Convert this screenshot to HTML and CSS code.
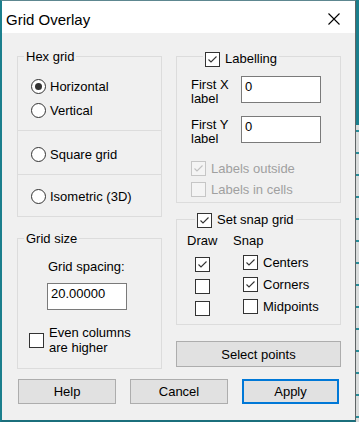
FILE: index.html
```html
<!DOCTYPE html>
<html lang="en">
<head>
  <meta charset="UTF-8">
  <meta name="viewport" content="width=device-width, initial-scale=1.0">
  <title>Grid Overlay</title>
  <link rel="stylesheet" href="styles.css">
</head>
<body>
<div class="screen">
  <div class="window">
    <div class="titlebar">
      <span class="title">Grid Overlay</span>
      <svg class="close" width="12" height="12" viewBox="0 0 12 12">
        <path d="M0.5 0.5 L11.5 11.5 M11.5 0.5 L0.5 11.5" stroke="#000" stroke-width="1.1" fill="none"/>
      </svg>
    </div>

    <div class="content">
      <div class="columns">
        <div class="col">
          <div class="group hex">
            <div class="section first">
              <div class="group-title hex-title">Hex grid</div>
              <div class="radio-row top-row"><span class="radio on"><span class="dot"></span></span>Horizontal</div>
              <div class="radio-row"><span class="radio"></span>Vertical</div>
            </div>
            <div class="section second">
              <div class="radio-row"><span class="radio"></span>Square grid</div>
            </div>
            <div class="section third">
              <div class="radio-row"><span class="radio"></span>Isometric (3D)</div>
            </div>
          </div>

          <div class="group size">
            <div class="group-title">Grid size</div>
            <div class="spacing-label">Grid spacing:</div>
            <div class="field spacing-field">20.00000</div>
            <div class="check-row even">
              <span class="check"></span>
              <span>Even columns<br>are higher</span>
            </div>
          </div>
        </div>

        <div class="col">
          <div class="group labelling">
            <div class="group-title check-title lab-title">
              <span class="check"><svg viewBox="0 0 13 13"><polyline points="2.5,6.5 5,9 10.5,3.5"/></svg></span>Labelling
            </div>
            <div class="label-row first-row">
              <span class="field-label">First X<br>label</span>
              <div class="field">0</div>
            </div>
            <div class="label-row">
              <span class="field-label">First Y<br>label</span>
              <div class="field">0</div>
            </div>
            <div class="check-row disabled outside">
              <span class="check"><svg viewBox="0 0 13 13"><polyline points="2.5,6.5 5,9 10.5,3.5"/></svg></span>Labels outside
            </div>
            <div class="check-row disabled cells">
              <span class="check"></span>Labels in cells
            </div>
          </div>

          <div class="group snap">
            <div class="group-title check-title snap-title">
              <span class="check"><svg viewBox="0 0 13 13"><polyline points="2.5,6.5 5,9 10.5,3.5"/></svg></span>Set snap grid
            </div>
            <div class="snap-cols">
              <div class="draw-col">
                <div class="col-head">Draw</div>
                <div class="rows">
                  <div class="snap-row"><span class="check"><svg viewBox="0 0 13 13"><polyline points="2.5,6.5 5,9 10.5,3.5"/></svg></span></div>
                  <div class="snap-row"><span class="check"></span></div>
                  <div class="snap-row"><span class="check"></span></div>
                </div>
              </div>
              <div class="snap-col">
                <div class="col-head">Snap</div>
                <div class="rows">
                  <div class="snap-row"><span class="check"><svg viewBox="0 0 13 13"><polyline points="2.5,6.5 5,9 10.5,3.5"/></svg></span>Centers</div>
                  <div class="snap-row"><span class="check"><svg viewBox="0 0 13 13"><polyline points="2.5,6.5 5,9 10.5,3.5"/></svg></span>Corners</div>
                  <div class="snap-row"><span class="check"></span>Midpoints</div>
                </div>
              </div>
            </div>
          </div>

          <button class="btn select">Select points</button>
        </div>
      </div>

      <div class="footer">
        <button class="btn">Help</button>
        <button class="btn">Cancel</button>
        <button class="btn default">Apply</button>
      </div>
    </div>
  </div>
  <div class="behind"></div>
</div>
</body>
</html>
```

FILE: styles.css
```css
* {
  box-sizing: border-box;
}

body {
  margin: 0;
  background: #1b7f8d;
  font-family: "Liberation Sans", Arial, sans-serif;
  font-size: 13px;
  color: #000;
}

.screen {
  display: flex;
  height: 422px;
}

.window {
  width: 356px;
  height: 422px;
  display: flex;
  flex-direction: column;
  background: #f0f0f0;
  border-left: 2px solid #1b7f8d;
  border-top: 1px solid #5d8790;
  border-right: 1px solid #5f6566;
  border-bottom: 2px solid #1b6f7c;
}

.behind {
  flex: 1;
  background:
    linear-gradient(#1b7f8d, #1b7f8d) top / 100% 125px no-repeat,
    repeating-linear-gradient(#d9dcdc 0 20px, #2a8c99 20px 22px);
}

/* title bar */
.titlebar {
  height: 32px;
  background: #fff;
  display: flex;
  justify-content: space-between;
  align-items: flex-start;
  padding: 10px 15px 0 4px;
}

.title {
  font-size: 15px;
  line-height: 18px;
}

.close {
  margin-top: 2px;
}

/* body */
.content {
  flex: 1;
  padding: 23px 14px 0 15px;
}

.columns {
  display: grid;
  grid-template-columns: 145px 165px;
  column-gap: 14px;
  align-items: start;
}

.col {
  display: flex;
  flex-direction: column;
}

.group {
  border: 1px solid #dcdcdc;
}

.group-title {
  width: fit-content;
  height: 16px;
  line-height: 16px;
  margin: -8px 0 0 6px;
  padding: 0 2px;
  background: #f0f0f0;
}

.check-title {
  display: flex;
  align-items: center;
  gap: 5px;
}

.hex-title {
  margin-left: -7px;
}

.lab-title {
  margin: -6px 0 0 12px;
}

.snap-title {
  margin: -8px 0 0 8px;
}

/* hex grid */
.section {
  padding: 0 0 8px 13px;
}

.top-row {
  margin-top: 9px;
}

.section.second {
  border-top: 1px solid #dcdcdc;
  padding-top: 11px;
}

.section.third {
  border-top: 1px solid #dcdcdc;
  padding-top: 9px;
}

.radio-row {
  height: 24px;
  display: flex;
  align-items: center;
  gap: 4px;
}

.radio {
  width: 15px;
  height: 15px;
  border: 1px solid #333;
  border-radius: 50%;
  background: #fff;
  display: flex;
  align-items: center;
  justify-content: center;
}

.radio .dot {
  width: 7px;
  height: 7px;
  border-radius: 50%;
  background: #333;
}

/* checkboxes */
.check {
  width: 15px;
  height: 15px;
  flex-shrink: 0;
  border: 1px solid #333;
  background: #fff;
  display: flex;
}

.check svg {
  width: 13px;
  height: 13px;
}

.check polyline {
  fill: none;
  stroke: #333;
  stroke-width: 1.1;
}

.check-row {
  display: flex;
  align-items: center;
  gap: 5px;
}

.disabled {
  color: #a0a0a0;
}

.disabled .check {
  border-color: #c6c6c6;
  background: #f4f4f4;
}

.disabled .check polyline {
  stroke: #c0c0c0;
}

/* grid size */
.size {
  margin-top: 21px;
  padding-bottom: 13px;
}

.spacing-label {
  margin: 12px 0 0 30px;
  line-height: 16px;
}

.field {
  width: 80px;
  height: 27px;
  background: #fff;
  border: 1px solid #7a7a7a;
  padding: 2px 3px 0;
  line-height: 16px;
}

.spacing-field {
  margin: 8px 0 0 29px;
}

.even {
  margin: 15px 0 0 11px;
  line-height: 15px;
}

/* labelling */
.labelling {
  padding: 0 0 5px 14px;
}

.label-row {
  display: flex;
  align-items: flex-start;
  height: 27px;
  margin-top: 13px;
}

.label-row.first-row {
  margin-top: 9px;
}

.field-label {
  width: 50px;
  line-height: 14px;
  margin-top: 2px;
}

.outside {
  height: 16px;
  margin-top: 17px;
}

.cells {
  height: 16px;
  margin-top: 5px;
}

/* snap grid */
.snap {
  margin-top: 16px;
  padding: 0 0 5px 10px;
}

.snap-cols {
  display: flex;
  margin-top: 5px;
}

.draw-col {
  width: 46px;
}

.col-head {
  line-height: 16px;
}

.draw-col .rows {
  margin: 4px 0 0 8px;
}

.snap-col .rows {
  margin: 2px 0 0 10px;
}

.snap-row {
  height: 22px;
  display: flex;
  align-items: center;
  gap: 5px;
}

/* buttons */
.btn {
  font-family: inherit;
  font-size: 13px;
  color: #000;
  background: #e1e1e1;
  border: 1px solid #adadad;
  padding: 0;
}

.select {
  margin-top: 16px;
  height: 26px;
}

.footer {
  display: flex;
  gap: 14px;
  margin-top: 10px;
  padding-left: 1px;
}

.footer .btn {
  width: 98px;
  height: 25px;
}

.footer .default {
  width: 97px;
  border: 2px solid #0078d7;
}
```
